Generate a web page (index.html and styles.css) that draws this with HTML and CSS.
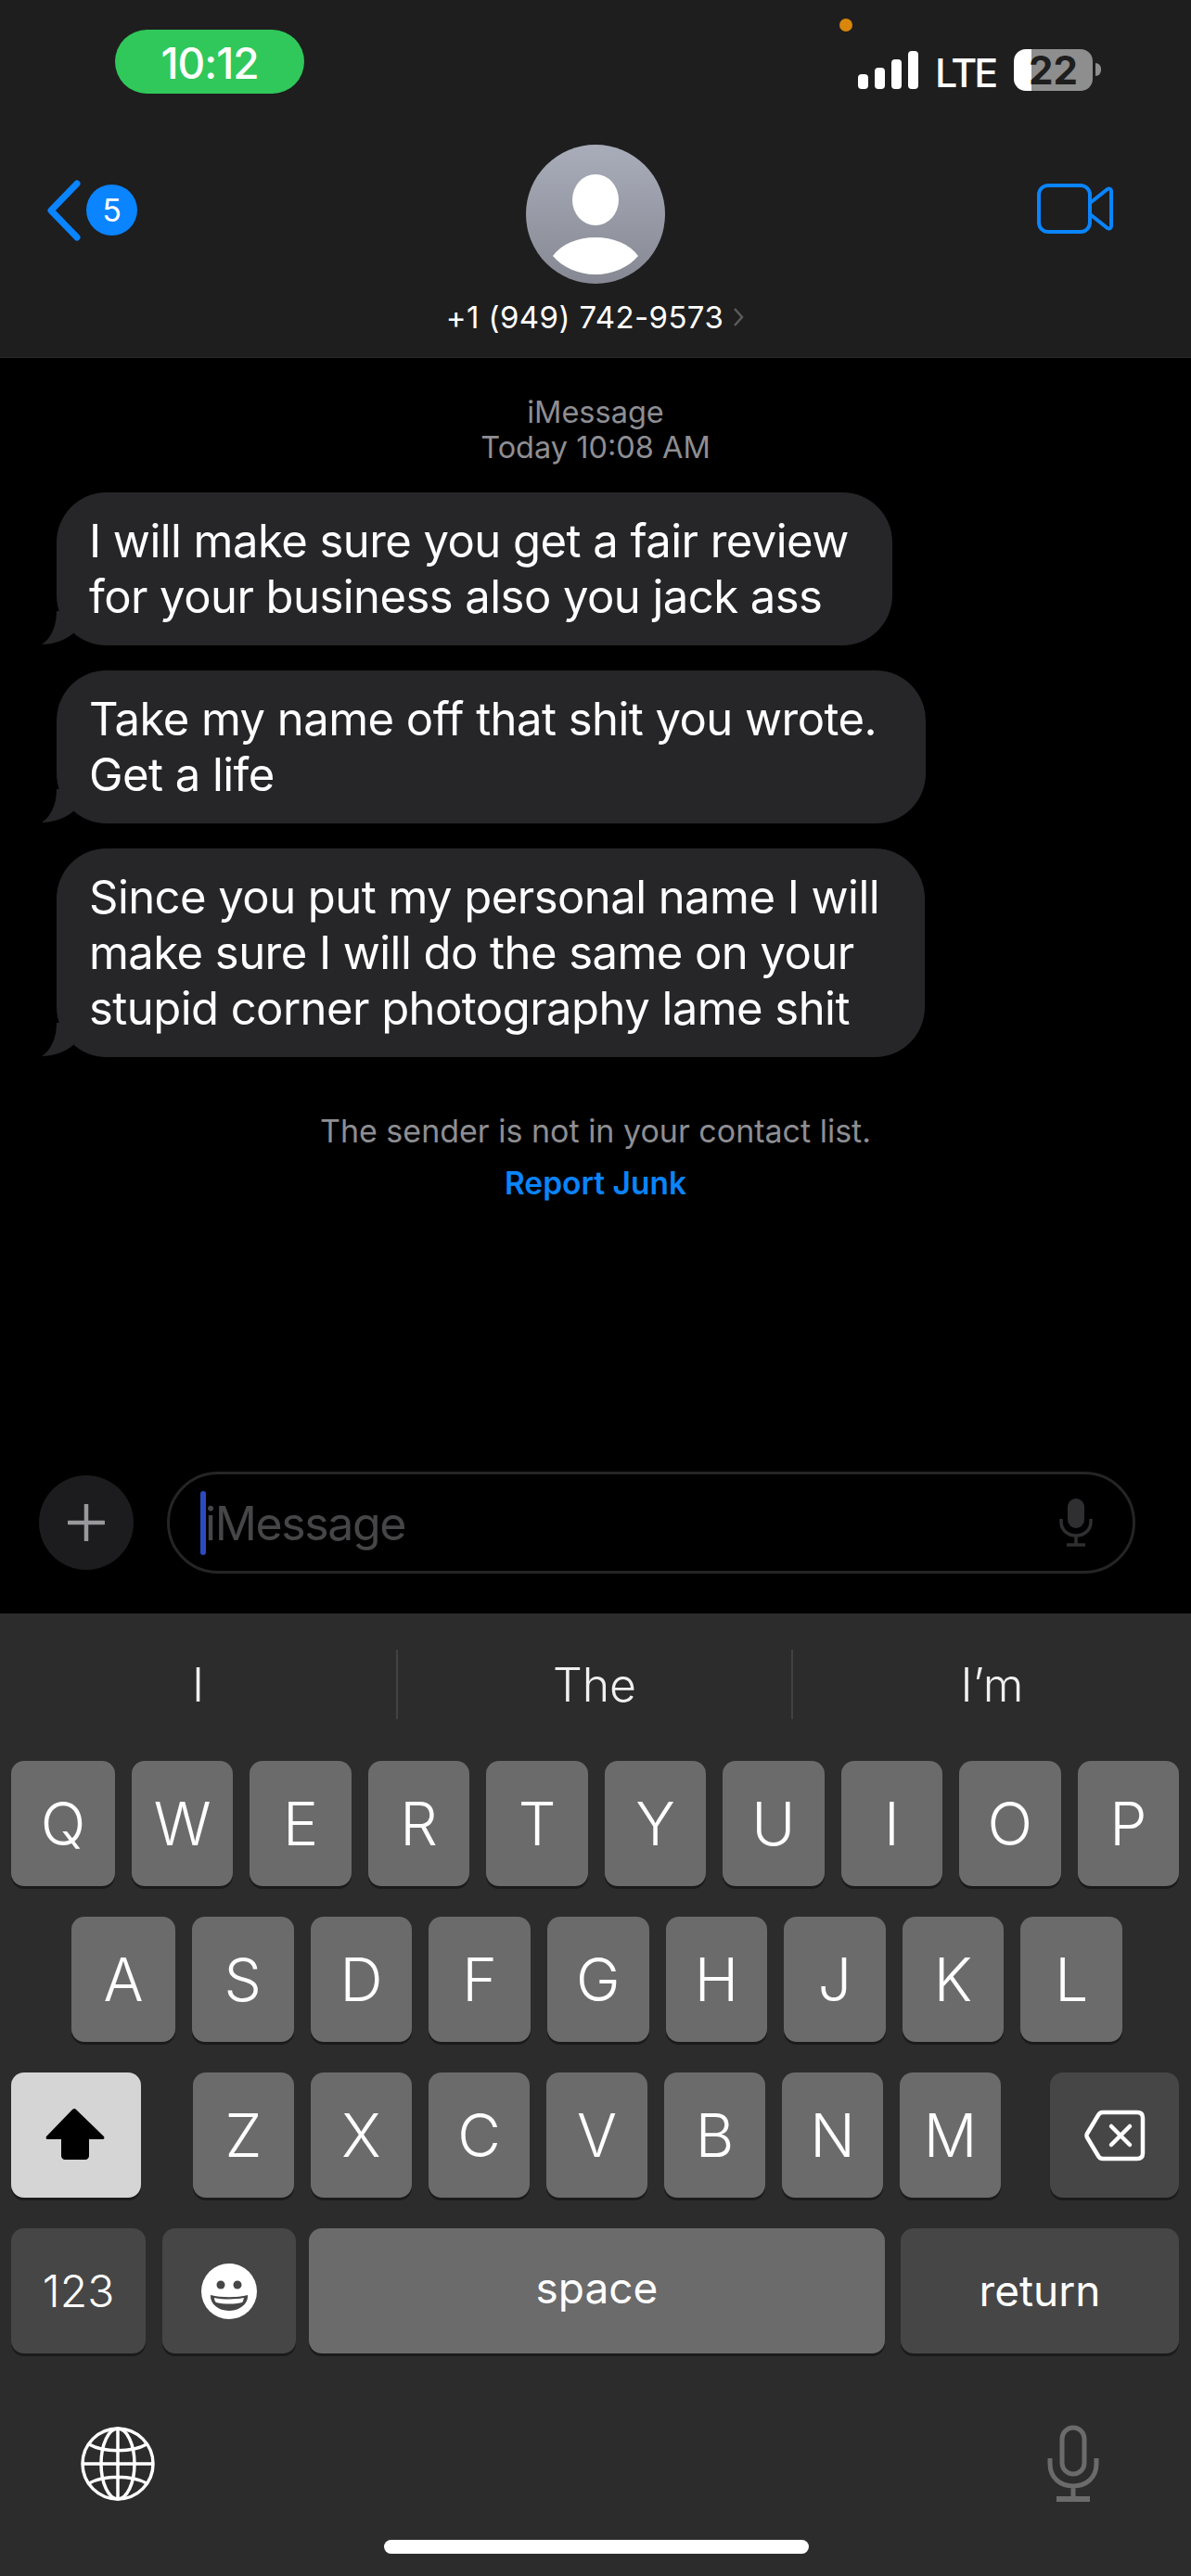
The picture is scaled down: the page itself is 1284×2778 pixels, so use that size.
FILE: index.html
```html
<!DOCTYPE html>
<html lang="en">
<head>
<meta charset="utf-8">
<title>Messages</title>
<link rel="stylesheet" href="styles.css">
</head>
<body>
<div class="app">
  <header class="header">
    <div class="status">
      <div class="time-pill">10:12</div>
      <span class="orange-dot"></span>
      <div class="status-right">
        <svg class="signal" width="65" height="41" viewBox="0 0 65 41" fill="#fff"><rect x="0" y="25" width="11" height="16" rx="4"/><rect x="18" y="18" width="11" height="23" rx="4"/><rect x="36" y="9" width="11" height="32" rx="4"/><rect x="54" y="0" width="11" height="41" rx="4"/></svg>
        <span class="lte">LTE</span>
        <div class="battery"><span class="battery-num">22</span></div>
        <span class="battery-nub"></span>
      </div>
    </div>
    <nav class="nav">
      <div class="nav-back">
        <svg width="38" height="66" viewBox="0 0 38 66" fill="none"><path d="M33 4 5 33l28 29" stroke="#0a84ff" stroke-width="7" stroke-linecap="round" stroke-linejoin="round"/></svg>
        <span class="badge">5</span>
      </div>
      <div class="contact">
        <div class="avatar">
          <svg width="150" height="150" viewBox="0 0 150 150"><ellipse cx="75" cy="59.500" rx="25" ry="27.500" fill="#fff"/><path d="M29 120c9-13 27-20 46-20s37 7 46 20c-10 12-27 20-46 20s-36-8-46-20z" fill="#fff"/></svg>
        </div>
        <div class="number">+1 (949) 742-9573<svg class="number-chevron" width="14" height="22" viewBox="0 0 14 22" fill="none"><path d="m3 2 8 9-8 9" stroke="#5b5b5d" stroke-width="2.500"/></svg></div>
      </div>
      <svg class="video" width="82" height="54" viewBox="0 0 82 54" fill="none" stroke="#0a84ff" stroke-width="4"><rect x="2" y="2" width="55" height="50" rx="10"/><path d="M57 21 76 6c2-1 4 0 4 2v38c0 2-2 3-4 2L57 33"/></svg>
    </nav>
  </header>

  <main class="thread">
    <div class="thread-head">
      <div class="service">iMessage</div>
      <div class="stamp">Today 10:08 AM</div>
    </div>
    <div class="bubbles">
      <div class="bubble bubble-a">I will make sure you get a fair review<br>for your business also you jack ass<svg class="tail" width="40" height="37" viewBox="0 0 40 37"><path d="M17 0C17 18 10 30 1 36c11 0 25-4 34-12V0z" fill="#262629"/></svg></div>
      <div class="bubble bubble-b">Take my name off that shit you wrote.<br>Get a life<svg class="tail" width="40" height="37" viewBox="0 0 40 37"><path d="M17 0C17 18 10 30 1 36c11 0 25-4 34-12V0z" fill="#262629"/></svg></div>
      <div class="bubble bubble-c">Since you put my personal name I will<br>make sure I will do the same on your<br>stupid corner photography lame shit<svg class="tail" width="40" height="37" viewBox="0 0 40 37"><path d="M17 0C17 18 10 30 1 36c11 0 25-4 34-12V0z" fill="#262629"/></svg></div>
    </div>
    <div class="notice">
      <div class="notice-text">The sender is not in your contact list.</div>
      <div class="report">Report Junk</div>
    </div>
    <div class="composer">
      <div class="plus">
        <svg width="40" height="40" viewBox="0 0 40 40"><path d="M20 1v38M1 20h38" stroke="#98989d" stroke-width="4.500" stroke-linecap="round"/></svg>
      </div>
      <div class="field">
        <span class="caret"></span>
        <span class="placeholder">iMessage</span>
        <svg class="field-mic" width="38" height="52" viewBox="0 0 38 52" fill="none"><rect x="10" y="0" width="18" height="32" rx="9" fill="#2f2f31"/><path d="M3 22v3c0 9 7 15 16 15s16-6 16-15v-3M19 40v9M9 50h20" stroke="#2f2f31" stroke-width="3.500"/></svg>
      </div>
    </div>
  </main>

  <section class="keyboard">
    <div class="suggestions">
      <div class="suggestion">I</div>
      <div class="suggestion suggestion-mid">The</div>
      <div class="suggestion">I’m</div>
    </div>
    <div class="rows">
      <div class="row">
        <div class="key key-first">Q</div><div class="key">W</div><div class="key">E</div><div class="key">R</div><div class="key">T</div><div class="key">Y</div><div class="key">U</div><div class="key">I</div><div class="key">O</div><div class="key">P</div>
      </div>
      <div class="row row-2">
        <div class="key key-first">A</div><div class="key">S</div><div class="key">D</div><div class="key">F</div><div class="key">G</div><div class="key">H</div><div class="key">J</div><div class="key">K</div><div class="key">L</div>
      </div>
      <div class="row">
        <div class="key key-shift">
          <svg width="64" height="56" viewBox="0 0 64 56"><path d="M32 1 63 31c1 2 0 3-2 3H47v18c0 2-2 4-4 4H21c-2 0-4-2-4-4V34H3c-2 0-3-1-2-3L29 2c1-1 2-1 3-1z" fill="#000"/></svg>
        </div>
        <div class="letters">
          <div class="key">Z</div><div class="key">X</div><div class="key">C</div><div class="key">V</div><div class="key">B</div><div class="key">N</div><div class="key">M</div>
        </div>
        <div class="key key-dark key-delete">
          <svg width="66" height="56" viewBox="0 0 66 56" fill="none" stroke="#fff" stroke-width="4.500" stroke-linejoin="round" stroke-linecap="round"><path d="M20 3h37c4 0 6 2 6 6v38c0 4-2 6-6 6H20c-3 0-4-1-5-3L3 30c-1-2-1-2 0-4L15 6c1-2 2-3 5-3z"/><path d="m29 18 20 20M49 18 29 38"/></svg>
        </div>
      </div>
      <div class="row">
        <div class="key key-dark key-num">123</div>
        <div class="key key-dark key-emoji">
          <svg width="60" height="60" viewBox="0 0 60 60"><circle cx="30" cy="30" r="30" fill="#fff"/><circle cx="21" cy="23" r="4.500" fill="#464646"/><circle cx="39" cy="23" r="4.500" fill="#464646"/><path d="M10 34c12 3 28 3 40 0 1 9-8 17-20 17S9 43 10 34z" fill="#464646"/><path d="M14 37c10 2 22 2 32 0-1 3-1 4-2 5-9 2-19 2-28 0-1-1-2-2-2-5z" fill="#fff"/></svg>
        </div>
        <div class="key key-space">space</div>
        <div class="key key-dark key-return">return</div>
      </div>
    </div>
    <div class="kb-bottom">
      <svg width="80" height="80" viewBox="0 0 80 80" fill="none" stroke="#fff" stroke-width="3.500"><circle cx="40" cy="40" r="38"/><ellipse cx="40" cy="40" rx="18" ry="38"/><path d="M40 2v76M2 40h76M9 19c16 9 46 9 62 0M9 61c16-9 46-9 62 0"/></svg>
      <svg width="56" height="84" viewBox="0 0 56 84" fill="none" stroke="#6b6b6b" stroke-width="5"><rect x="16" y="3" width="24" height="50" rx="12"/><path d="M3 36v6c0 15 11 24 25 24s25-9 25-24v-6M28 66v13"/><path d="M10 80h36" stroke-width="6"/></svg>
    </div>
    <div class="home-bar"></div>
  </section>
</div>
</body>
</html>
```
FILE: styles.css
```css
* { box-sizing: border-box; }
html, body { margin: 0; padding: 0; background: #000; }
body { font-family: Inter, "Noto Sans", "Liberation Sans", sans-serif; color: #fff; }
.app { width: 1284px; height: 2778px; display: flex; flex-direction: column; overflow: hidden; position: relative; }

.header { height: 386px; flex: none; background: #1e1e1e; border-bottom: 1px solid #2b2b2b; }
.status { height: 156px; display: flex; justify-content: space-between; align-items: flex-start; padding: 32px 97px 0 124px; position: relative; }
.time-pill { width: 204px; height: 69px; border-radius: 35px; background: #30c85a; font-size: 46px; font-weight: 500; letter-spacing: -1px; padding-top: 2px; display: flex; align-items: center; justify-content: center; }
.orange-dot { position: absolute; left: 905px; top: 20px; width: 14px; height: 14px; border-radius: 50%; background: #d9860c; }
.status-right { display: flex; align-items: flex-start; padding-top: 21px; position: relative; }
.signal { margin-top: 2px; margin-right: 18px; }
.lte { font-size: 43px; line-height: 45px; font-weight: 500; letter-spacing: -3px; width: 85px; padding-top: 3px; }
.battery { width: 85px; height: 45px; border-radius: 13px; background: linear-gradient(90deg, #fff 0 19px, #8e8e8e 19px); display: flex; align-items: center; justify-content: center; }
.battery-num { color: #1e1e1e; font-size: 42px; font-weight: 700; line-height: 1; }
.battery-nub { width: 6px; height: 14px; border-radius: 0 7px 7px 0; background: #8e8e8e; margin: 15px 0 0 3px; }

.nav { height: 229px; display: grid; grid-template-columns: 1fr auto 1fr; align-items: start; padding: 0 84px; }
.nav-back { display: flex; align-items: center; gap: 5px; margin: 38px 0 0 -34px; }
.badge { width: 55px; height: 55px; border-radius: 50%; background: #0a84ff; font-size: 34px; display: flex; align-items: center; justify-content: center; margin-top: -1px; }
.contact { display: flex; flex-direction: column; align-items: center; }
.avatar { width: 150px; height: 150px; border-radius: 50%; background: linear-gradient(180deg, #a9adba, #868993); overflow: hidden; }
.avatar svg { display: block; }
.number { margin-top: 17px; font-size: 33px; line-height: 38px; letter-spacing: .4px; display: flex; align-items: center; white-space: nowrap; }
.number-chevron { margin-left: 9px; }
.video { justify-self: end; margin-top: 42px; }

.thread { flex: 1; min-height: 0; background: #000; display: flex; flex-direction: column; padding-top: 40px; }
.thread-head { text-align: center; color: #8e8e93; font-size: 32.500px; line-height: 38px; }
.bubbles { display: flex; flex-direction: column; gap: 27px; margin-top: 29px; padding-left: 61px; align-items: flex-start; }
.bubble { position: relative; background: #262629; border-radius: 54px; padding: 23px 0 22px 35px; font-size: 49px; line-height: 60px; letter-spacing: -.55px; white-space: nowrap; }
.bubble-a { width: 901px; }
.bubble-b { width: 937px; }
.bubble-c { width: 936px; }
.tail { position: absolute; left: -17px; bottom: 0; }
.notice { text-align: center; margin-top: 60px; }
.notice-text { color: #8e8e93; font-size: 34px; line-height: 40px; }
.report { color: #0a84ff; font-size: 33.500px; font-weight: 600; line-height: 40px; margin-top: 16px; }
.composer { margin-top: auto; display: flex; align-items: center; gap: 36px; padding: 0 60px 43px 42px; }
.plus { width: 102px; height: 102px; border-radius: 50%; background: #1c1c1e; display: flex; align-items: center; justify-content: center; flex: none; }
.field { flex: 1; height: 110px; border: 3px solid #252527; border-radius: 55px; display: flex; align-items: center; padding: 0 42px 0 33px; }
.caret { width: 6px; height: 69px; border-radius: 3px; background: #2a4bc0; flex: none; }
.placeholder { color: #464648; font-size: 50px; letter-spacing: -1.400px; margin-left: -1px; padding-top: 2px; flex: 1; }
.field-mic { flex: none; }

.keyboard { height: 1038px; flex: none; background: #2c2c2c; display: flex; flex-direction: column; position: relative; }
.suggestions { height: 159px; flex: none; display: grid; grid-template-columns: 427px 428px 1fr; padding-top: 39px; }
.suggestion { height: 75px; display: flex; align-items: center; justify-content: center; font-size: 50px; font-weight: 300; color: #f0f0f0; }
.suggestion-mid { border-left: 2px solid #424242; border-right: 2px solid #424242; }
.rows { display: flex; flex-direction: column; gap: 33px; }
.row { height: 135px; display: flex; gap: 18px; padding: 0 13px 0 12px; }
.row-2 { padding: 0 74px 0 77px; }
.key { flex: 1; min-width: 0; height: 135px; border-radius: 14px; background: #6b6b6b; box-shadow: 0 3px 0 #1b1b1b; display: flex; align-items: center; justify-content: center; font-size: 64px; font-weight: 300; }
.key-first { flex: none; width: 112px; }
.letters { display: flex; gap: 18px; margin: 0 35px 0 38px; flex: none; }
.letters .key { width: 109px; flex: none; }
.key-dark { background: #464646; }
.key-shift { flex: none; width: 140px; background: #d5d5d5; padding: 0 2px 3px 0; }
.key-delete { flex: none; width: 139px; }
.key-num { flex: none; width: 145px; font-size: 48px; }
.key-emoji { flex: none; width: 144px; }
.key-space { flex: none; width: 621px; margin: 0 -1px 0 -4px; font-size: 46px; font-weight: 400; padding-bottom: 8px; }
.key-return { flex: none; width: 300px; font-size: 46px; font-weight: 400; padding-bottom: 2px; }
.kb-bottom { display: flex; justify-content: space-between; align-items: center; padding: 0 99px 0 87px; margin-top: 77px; }
.home-bar { position: absolute; left: 414px; top: 999px; width: 458px; height: 15px; border-radius: 8px; background: #fff; }
```
